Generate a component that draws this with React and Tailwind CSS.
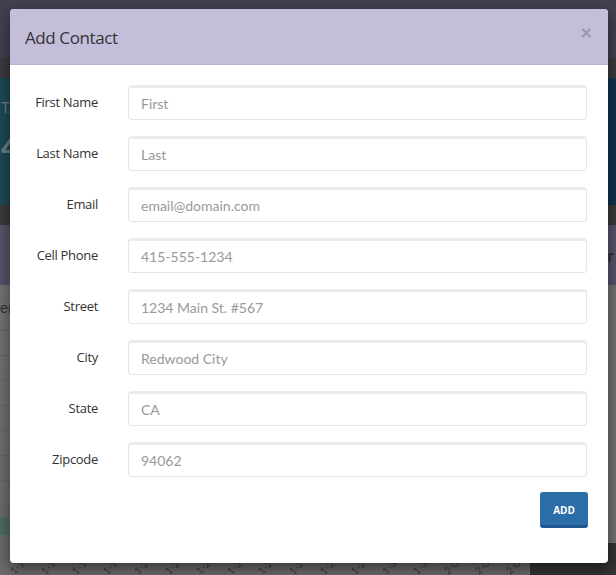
const fields = [
  { label: 'First Name', placeholder: 'First' },
  { label: 'Last Name', placeholder: 'Last' },
  { label: 'Email', placeholder: 'email@domain.com' },
  { label: 'Cell Phone', placeholder: '415-555-1234' },
  { label: 'Street', placeholder: '1234 Main St. #567' },
  { label: 'City', placeholder: 'Redwood City' },
  { label: 'State', placeholder: 'CA' },
  { label: 'Zipcode', placeholder: '94062' }
];

const ticks = ['1-10', '1-11', '1-16', '1-17', '1-20', '1-21', '1-22', '1-23', '1-24', '1-27', '1-28', '1-29', '1-30', '1-31', '2-03', '2-04', '2-05'];

const App = () => {
  return (
    <div className="relative w-[616px] h-[575px] overflow-hidden bg-[#444052]" style={{ fontFamily: 'Lato, "Open Sans", sans-serif' }}>
      {/* dimmed page behind the modal */}
      <div className="flex flex-col">
        <div className="h-[58px] bg-[#444052]" />
        <div className="h-[20px] bg-[#3b3a3e]" />
        <div className="h-[127px] bg-gradient-to-r from-[#1d4a53] to-[#12334b] text-[#6c7f86] pl-[1px]">
          <p className="pt-[22px] text-[15px] leading-none">TA</p>
          <p className="pt-[16px] text-[30px] font-bold leading-none">4</p>
        </div>
        <div className="h-[20px] bg-[#3a3a3a]" />
        <div className="h-[60px] bg-[#57536a] flex justify-end items-center">
          <span className="text-[#2a2a2a] text-[18px] pr-[2px]">r</span>
        </div>
        <div className="flex h-[290px]">
          <div className="flex-1 bg-gradient-to-b from-[#747474] to-[#6a6a6a] flex flex-col">
            <div className="h-[45px] flex items-center text-[#333] text-[15px]">er</div>
            {[0, 1, 2, 3, 4, 5, 6].map((i) => (
              <div key={i} className="h-[25px] border-t border-[#666]" />
            ))}
            <div className="h-[30px] border-t border-[#666] flex items-end">
              <div className="w-[20px] h-[18px] rounded-tr-full bg-[#4f6b62]" />
            </div>
            <div className="flex-1 flex gap-[5px] items-end text-[#3a3a3a] text-[10px] pl-[8px] pb-[4px] overflow-hidden">
              {ticks.map((t) => (
                <span key={t} className="inline-block -rotate-45 whitespace-nowrap w-[26px]">{t}</span>
              ))}
            </div>
          </div>
          <div className="w-[96px] bg-[#727272] flex flex-col">
            <div className="h-[258px]" />
            <div className="flex-1 bg-[#333]" />
          </div>
        </div>
      </div>

      {/* modal */}
      <div className="absolute left-[10px] top-[9px] w-[598px] h-[554px] bg-white rounded-[4px] overflow-hidden shadow-[0_5px_15px_rgba(0,0,0,0.5)]">
        <div className="h-[56px] bg-[#c4bedb] border-b border-[#b8b1d3] flex items-center justify-between pl-[15px] pr-[16px]">
          <h4 className="text-[17px] text-[#333] pt-[2px]" style={{ fontFamily: '"Open Sans", sans-serif', letterSpacing: '-0.4px' }}>Add Contact</h4>
          <span className="text-[#9b97a8] text-[20px] font-bold leading-none -mt-[10px]">×</span>
        </div>
        <div className="pt-[20px] px-[20px]">
          <div className="flex flex-col gap-[16px]">
            {fields.map((f) => (
              <div key={f.label} className="flex items-center">
                <label className="w-[68px] text-right text-[13px] text-[#333]" style={{ fontFamily: '"Open Sans", sans-serif', letterSpacing: '-0.3px' }}>{f.label}</label>
                <div className="ml-[30px] w-[459px] h-[35px] rounded-[4px] border border-[#e4e4e4] border-t-[3px] border-t-[#ececec] flex items-center pl-[12px] text-[14px] text-[#999]">
                  {f.placeholder}
                </div>
              </div>
            ))}
          </div>
          <div className="flex justify-end pt-[15px]">
            <button className="w-[48px] h-[36px] rounded-[3px] bg-[#2a6da7] border-b-[3px] border-[#1d5891] text-white text-[10px] font-bold pt-[3px]" style={{ fontFamily: '"Open Sans", sans-serif' }}>ADD</button>
          </div>
        </div>
      </div>
    </div>
  );
};

export default App;
